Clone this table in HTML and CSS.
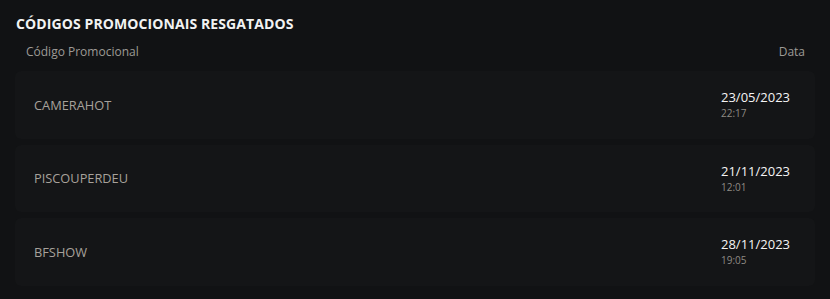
FILE: index.html
```html
<!DOCTYPE html>
<html lang="pt">
<head>
<meta charset="utf-8">
<link rel="stylesheet" href="styles.css">
</head>
<body>
<div class="page">
  <h2 class="title">CÓDIGOS PROMOCIONAIS RESGATADOS</h2>
  <div class="head">
    <span>Código Promocional</span>
    <span>Data</span>
  </div>
  <div class="list">
    <div class="row">
      <span class="code">CAMERAHOT</span>
      <div class="when"><div class="date">23/05/2023</div><div class="time">22:17</div></div>
    </div>
    <div class="row">
      <span class="code">PISCOUPERDEU</span>
      <div class="when"><div class="date">21/11/2023</div><div class="time">12:01</div></div>
    </div>
    <div class="row">
      <span class="code">BFSHOW</span>
      <div class="when"><div class="date">28/11/2023</div><div class="time">19:05</div></div>
    </div>
  </div>
</div>
</body>
</html>
```
FILE: styles.css
```css
html, body {
  margin: 0;
  background: #111214;
}
body {
  font-family: "Open Sans", "Liberation Sans", sans-serif;
  color: #a7a19b;
}
.page {
  padding: 14px 15px 0 15px;
}
.title {
  margin: 0 0 0 1px;
  font-size: 14px;
  font-weight: 700;
  letter-spacing: 0.1px;
  line-height: 20px;
  color: #f2f2f2;
}
.head {
  display: flex;
  justify-content: space-between;
  margin-top: 10px;
  padding: 0 10px 0 11px;
  font-size: 12px;
  line-height: 16px;
  color: #9d9a96;
}
.list {
  display: flex;
  flex-direction: column;
  gap: 6px;
  margin-top: 11px;
}
.row {
  display: flex;
  align-items: center;
  justify-content: space-between;
  height: 67.5px;
  padding: 0 25px 0 19px;
  background: #141517;
  border-radius: 6px;
}
.code {
  font-size: 12.8px;
  color: #a7a19b;
}
.when {
  width: 69px;
}
.date {
  font-size: 13px;
  line-height: 17px;
  color: #f4f4f4;
}
.time {
  font-size: 10px;
  line-height: 14px;
  color: #8f8a84;
}
```
